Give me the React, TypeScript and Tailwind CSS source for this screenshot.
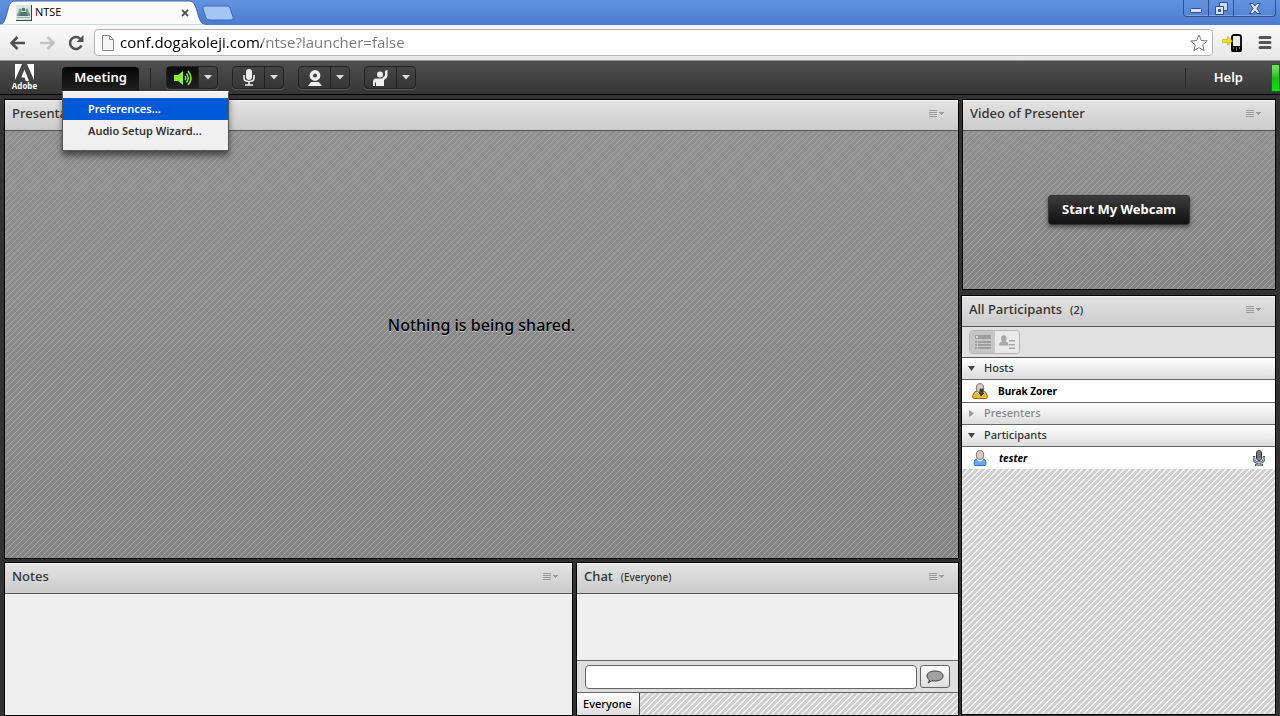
import { useState, type ReactNode } from "react";

const darkStripes =
  "bg-[linear-gradient(135deg,#a6a6a6_8%,transparent_8%,transparent_50%,#a6a6a6_50%,#a6a6a6_58%,transparent_58%),linear-gradient(180deg,#909090,#848484)] bg-[size:6px_6px,100%_100%]";
const lightStripes =
  "bg-[linear-gradient(135deg,#f2f2f2_10%,transparent_10%,transparent_50%,#f2f2f2_50%,#f2f2f2_60%,transparent_60%)] bg-[size:6px_6px] bg-[#cfcfcf]";

function PodMenuIcon() {
  return (
    <svg width="16" height="8" viewBox="0 0 16 8" shapeRendering="crispEdges">
      <path d="M0 0h8v1H0zM0 2h8v1H0zM0 4h8v1H0zM0 6h8v1H0z" fill="#9c9c9c" />
      <path d="M10 2h5v1h-1v1h-1v1h-1V4h-1V3h-1z" fill="#9c9c9c" />
    </svg>
  );
}

type PodProps = { title: string; note?: ReactNode; className?: string; children?: ReactNode };

function Pod({ title, note, className = "", children }: PodProps) {
  return (
    <section className={`flex flex-col border border-black ${className}`}>
      <header className="flex h-[31px] shrink-0 items-center border-b border-[#555] bg-linear-to-b from-[#e3e3e3] to-[#cbcbcb] pr-[13px] pb-[2px] pl-[7px] shadow-[inset_0_1px_0_#f3f3f3]">
        <h2 className="text-[13px] font-medium text-[#333]">{title}</h2>
        {note}
        <button type="button" aria-label={`${title} options`} className="ml-auto">
          <PodMenuIcon />
        </button>
      </header>
      {children}
    </section>
  );
}

function BrowserTabs() {
  return (
    <div className="flex h-[25px] bg-linear-to-b from-[#6394e0] to-[#4c7ace]">
      <div className="relative flex h-[25px] w-[205px] items-center">
        <svg className="absolute inset-0" width="205" height="25" viewBox="0 0 205 25">
          <path d="M0 25C4 24 5 20 7 13 9 5 10 1 15 1H189C194 1 195 5 197 11 199 19 201 24 205 25Z" fill="#fbfbfb" stroke="#3f66ad" />
          <path d="M0 25H205" stroke="#fbfbfb" />
        </svg>
        <svg className="relative ml-4" width="16" height="16" viewBox="0 0 16 16">
          <path d="M0 0h16v16H0z" fill="#3a4446" />
          <path d="M0 0h15v15H0z" fill="#d9e5e1" />
          <path d="M1 9 3 6h2l2 3v2H1zM8 9l2-3h2l2 3v2H8z" fill="#7c9b93" />
          <circle cx="4" cy="5" r="1.500" fill="#7c9b93" />
          <circle cx="11" cy="5" r="1.500" fill="#7c9b93" />
          <circle cx="7.500" cy="4.500" r="1.800" fill="#4e7569" />
          <path d="M5 7h5l2 4H3z" fill="#4e7569" />
          <path d="M1 12h13v1H1z" fill="#9bb5ad" />
        </svg>
        <span className="relative ml-[3px] font-['Open_Sans','Noto_Sans',sans-serif] text-[11px] text-black">NTSE</span>
        <button type="button" aria-label="Close tab" className="relative mr-4 ml-auto">
          <svg width="8" height="8" viewBox="0 0 8 8" stroke="#555" strokeWidth="1.8">
            <path d="M1 1 7 7M7 1 1 7" />
          </svg>
        </button>
      </div>
      <button type="button" aria-label="New tab" className="mt-[5px] -ml-1 self-start">
        <svg width="34" height="16" viewBox="0 0 34 16">
          <path d="M4 1H26Q28 1 29 3L32 12Q33 15 30 15H9Q6 15 5 13L2 4Q1 1 4 1Z" fill="#a3c6f4" stroke="#4169b2" />
        </svg>
      </button>
      <div className="mr-[4px] ml-auto flex h-[17px] rounded-b border border-t-0 border-[#304f8c] shadow-[inset_0_-1px_0_#7ba4e3]">
        <button type="button" aria-label="Minimize" className="flex w-6 items-center justify-center">
          <svg width="12" height="5" viewBox="0 0 12 5" className="mt-1">
            <rect x="0.5" y="0.5" width="11" height="4" rx="1" fill="#d6e3f8" stroke="#304f8c" />
          </svg>
        </button>
        <button type="button" aria-label="Restore" className="flex w-[26px] items-center justify-center border-x border-[#304f8c]">
          <svg width="13" height="13" viewBox="0 0 13 13" stroke="#304f8c" fillRule="evenodd">
            <path d="M4.500.5h8v8h-8z" fill="#c9dbf6" />
            <path d="M.5 4.500h8v8h-8zM3.500 7.500v2h2v-2z" fill="#d6e3f8" />
          </svg>
        </button>
        <button type="button" aria-label="Close window" className="flex w-[41px] items-center justify-center">
          <svg width="12" height="11" viewBox="0 0 12 11">
            <path d="M.5.5H4L6 3 8 .5h3.500L8 5.500l3.500 5H8L6 8l-2 2.500H.5L4 5.500Z" fill="#d6e3f8" stroke="#304f8c" />
          </svg>
        </button>
      </div>
    </div>
  );
}

function AddressBar() {
  return (
    <div className="flex h-9 items-center border-b border-[#9a9a9a] bg-linear-to-b from-[#fbfbfb] to-[#e6e6e6] pr-2 pl-[9px]">
      <button type="button" aria-label="Back" className="pt-[1px]">
        <svg width="17" height="14" viewBox="0 0 17 14" fill="none" stroke="#505050" strokeWidth="2.600">
          <path d="M16 7H3M8.500 1 2.500 7l6 6" />
        </svg>
      </button>
      <button type="button" aria-label="Forward" className="ml-[13px] pt-[1px]">
        <svg width="17" height="14" viewBox="0 0 17 14" fill="none" stroke="#c3c3c3" strokeWidth="2.600">
          <path d="M1 7h13M8.500 1l6 6-6 6" />
        </svg>
      </button>
      <button type="button" aria-label="Reload" className="ml-3">
        <svg width="16" height="16" viewBox="0 0 16 16">
          <path d="M13.500 10.500A6 6 0 1 1 12 3.500" fill="none" stroke="#505050" strokeWidth="2.500" />
          <path d="M15.500 0v7H8.500Z" fill="#505050" />
        </svg>
      </button>
      <div className="mr-[9px] ml-[10px] flex h-[27px] flex-1 items-center rounded-sm border border-[#b4b4b4] bg-white pr-1 pl-[7px]">
        <svg width="12" height="16" viewBox="0 0 12 16" fill="#f6f6f6" stroke="#888">
          <path d="M.5.5h7l4 4v11H.5zM7.500.5v4h4" />
        </svg>
        <input
          type="text"
          aria-label="Address"
          defaultValue="conf.dogakoleji.com/ntse?launcher=false"
          className="ml-[6px] min-w-0 flex-1 bg-[linear-gradient(90deg,#000_142px,#777_142px)] bg-clip-text font-['Open_Sans','Noto_Sans',sans-serif] text-[15px] text-transparent outline-none"
        />
        <button type="button" aria-label="Bookmark">
          <svg width="18" height="18" viewBox="0 0 18 18">
            <path d="m9 1 2.300 5.500 6 .5-4.600 3.900 1.500 5.900L9 13.600l-5.200 3.200 1.500-5.900L.7 7l6-.5Z" fill="#fff" stroke="#777" />
          </svg>
        </button>
      </div>
      <button type="button" aria-label="Send to phone">
        <svg width="20" height="18" viewBox="0 0 20 18">
          <rect x="10" y="1" width="9" height="16" rx="2" fill="#e8e8e8" stroke="#000" strokeWidth="1.800" />
          <path d="M9 12h11v4q0 2-2 2h-7q-2 0-2-2z" fill="#000" />
          <path d="M11 14h1M14 14h1M17 14h1M14 16h1" stroke="#ccc" />
          <path d="M.5 5.500h5V2.500l5 4.500-5 4.500v-3h-5z" fill="#f8dc1c" stroke="#bda200" strokeWidth="0.600" />
        </svg>
      </button>
      <button type="button" aria-label="Browser menu" className="ml-4">
        <svg width="14" height="13" viewBox="0 0 14 13" stroke="#555" strokeWidth="3" strokeLinecap="round">
          <path d="M2 1.500h10M2 6.500h10M2 11.500h10" />
        </svg>
      </button>
    </div>
  );
}

function SplitButton({ label, active, children }: { label: string; active?: boolean; children: ReactNode }) {
  return (
    <div className="flex h-[23px] rounded-sm border border-[#222] bg-linear-to-b from-[#454545] to-[#363636] shadow-[0_1px_0_#5a5a5a]">
      <button
        type="button"
        aria-label={label}
        aria-pressed={active}
        className={`flex w-8 items-center justify-center border-r border-[#222] ${active ? "bg-linear-to-b from-[#0c0c0c] to-[#1e1e1e]" : ""}`}
      >
        {children}
      </button>
      <button type="button" aria-label={`${label} options`} className="flex w-[18px] items-center justify-center">
        <svg width="8" height="5" viewBox="0 0 8 5">
          <path d="M0 0h8L4 4.500Z" fill="#ddd" />
        </svg>
      </button>
    </div>
  );
}

function MeetingMenu() {
  return (
    <div
      role="menu"
      className="absolute top-[30px] left-[62px] z-10 w-[167px] border border-[#555] border-t-white bg-[#f0f0f0] pt-[6px] pb-[8px] text-[11px] font-semibold shadow-[0_5px_6px_rgba(0,0,0,0.5)]"
    >
      <button type="button" role="menuitem" className="block h-[22px] w-full bg-[#0059d6] pl-[25px] text-left text-white">
        Preferences...
      </button>
      <button type="button" role="menuitem" className="block h-[22px] w-full pl-[25px] text-left text-[#333]">
        Audio Setup Wizard...
      </button>
    </div>
  );
}

function AppBar() {
  return (
    <nav className="relative flex h-[34px] items-center border-b border-black bg-linear-to-b from-[#505050] to-[#353535] text-white">
      <div className="ml-[11px] flex w-[27px] flex-col items-center">
        <svg width="19" height="17" viewBox="0 0 19 17" fill="#fff">
          <path d="M0 0h7L0 16ZM12 0h7v16ZM9.500 5.500 14 17h-3.200l-1.300-3.500H6.300Z" />
        </svg>
        <span className="font-['Open_Sans','Noto_Sans',sans-serif] text-[8px] leading-[10px] font-bold">Adobe</span>
      </div>
      <button type="button" aria-haspopup="menu" className="mt-[6px] ml-6 h-6 w-[77px] self-start rounded-t-sm bg-linear-to-b from-[#060606] to-[#222] pb-[3px] text-[13px] font-semibold">
        Meeting
      </button>
      <div className="ml-[11px] h-5 w-px bg-[#252525]" />
      <div className="ml-[15px] flex gap-[14px]">
        <SplitButton label="Speakers" active>
          <svg width="18" height="16" viewBox="0 0 18 16" fill="none" stroke="#8eea3a" strokeWidth="1.500">
            <path d="M0 5h4l5-4v14l-5-4H0Z" fill="#8eea3a" stroke="none" />
            <path d="M11 6q1.500 2 0 4M12.500 3.500q3.500 4.500 0 9M14 1q6 7 0 14" />
          </svg>
        </SplitButton>
        <SplitButton label="Microphone">
          <svg width="12" height="17" viewBox="0 0 12 17">
            <rect x="3" y="0" width="6" height="11" rx="3" fill="#eee" />
            <path d="M1 6v3q0 3.500 5 3.500T11 9V6M6 12v4M2 16h8" fill="none" stroke="#eee" strokeWidth="1.600" />
          </svg>
        </SplitButton>
        <SplitButton label="Webcam">
          <svg width="14" height="16" viewBox="0 0 14 16">
            <circle cx="7" cy="5.500" r="3.700" fill="none" stroke="#eee" strokeWidth="3.400" />
            <path d="M3 12h8l3 4H0Z" fill="#eee" />
          </svg>
        </SplitButton>
        <SplitButton label="Raise hand">
          <svg width="15" height="16" viewBox="0 0 15 16" fill="#eee">
            <circle cx="7" cy="4.500" r="3" />
            <path d="M12 1 14 0h.5V6q0 2-3.500 4v6H3v-4l-1 1v3H0v-4q0-3.500 3-3.500h6l3-3Z" />
          </svg>
        </SplitButton>
      </div>
      <div className="ml-auto h-5 w-px bg-[#252525]" />
      <button type="button" className="ml-[28px] text-[13px] font-semibold">
        Help
      </button>
      <div className="ml-[28px] h-7 w-[9px] border border-[#176617] bg-linear-to-b from-[#7be06d] via-[#1eb81e] to-[#00e600]" />
      <MeetingMenu />
    </nav>
  );
}

function Person({ shirt, edge, mic }: { shirt: string; edge: string; mic?: boolean }) {
  return (
    <svg width="16" height="16" viewBox="0 0 16 16">
      {mic ? (
        <path d="M1.500 15.500Q0 15 1 12 2 8 5 8h6q3 0 4 4 1 3-.5 3.500Z" fill={shirt} stroke={edge} />
      ) : (
        <path d="M3 15.500Q2 15.500 2 13 2 9 5 9h6q3 0 3 4 0 2.500-1 2.500Z" fill={shirt} stroke={edge} />
      )}
      <path d="M5 9q3 4 6 0" fill="#fff" stroke="#fff" />
      <ellipse cx="8" cy="5" rx="3.700" ry="4.400" fill="#d8cdbd" stroke="#777" />
      {mic && <path d="M8 6h3v4H8zM7 9l2 4 3-3" fill="#333" stroke="#444" />}
    </svg>
  );
}

function Group({ name, open }: { name: string; open?: boolean }) {
  return (
    <button
      type="button"
      aria-expanded={!!open}
      className={`flex h-[22px] shrink-0 items-center border-b border-[#666] bg-linear-to-b from-white to-[#dcdcdc] pl-[6px] text-[11px] font-medium ${open ? "text-[#333]" : "text-[#888]"}`}
    >
      <svg width="7" height="7" viewBox="0 0 7 7">
        {open ? <path d="M0 1h7L3.500 6Z" fill="#444" /> : <path d="M1 0v7l5-3.500Z" fill="#999" />}
      </svg>
      <span className="ml-[9px]">{name}</span>
    </button>
  );
}

function Participants() {
  return (
    <Pod title="All Participants" note={<span className="ml-2 text-[11px] font-medium text-[#333]">(2)</span>} className="-ml-px flex-1">
      <div className="flex h-[31px] shrink-0 items-center border-b border-[#555] bg-[#e1e1e1] pl-[7px]">
        <div className="flex h-6 overflow-hidden rounded-sm border border-[#b5b5b5]">
          <button type="button" aria-label="Attendee view" className="flex w-[25px] items-center justify-center bg-[#c6c6c6]">
            <svg width="16" height="15" viewBox="0 0 16 15" fill="#9f9f9f" shapeRendering="crispEdges">
              <path d="M0 0h16v4H0zM0 6h2v2H0zM3 6h13v2H3zM0 9h2v2H0zM3 9h13v2H3zM0 12h2v2H0zM3 12h13v2H3z" />
              <path d="M1 1h2v2H1z" fill="#ddd" />
            </svg>
          </button>
          <button type="button" aria-label="Attendee status view" className="flex w-6 items-center justify-center bg-[#eaeaea]">
            <svg width="16" height="15" viewBox="0 0 16 15" fill="#a8a8a8">
              <path d="M2 3a2.800 2.800 0 0 1 5.600 0q0 2-1 3.500 2.900.5 2.900 4H0q0-3.500 3-4-1-1.500-1-3.500ZM10 5h6v1.500h-6zM10 9h6v1.500h-6zM10 12.500h6V14h-6z" />
            </svg>
          </button>
        </div>
      </div>
      <Group name="Hosts" open />
      <div className="flex h-[23px] shrink-0 items-center border-b border-[#666] bg-white pl-[10px] text-[10px] font-bold text-black">
        <Person shirt="#efb83e" edge="#98661a" mic />
        <span className="ml-[10px]">Burak Zorer</span>
      </div>
      <Group name="Presenters" />
      <Group name="Participants" open />
      <div className="flex h-[22px] shrink-0 items-center bg-white pr-[10px] pl-[10px] text-[10px] font-bold text-black italic">
        <Person shirt="#6eaaea" edge="#316eb5" />
        <span className="ml-[11px]">tester</span>
        <svg className="ml-auto" width="12" height="16" viewBox="0 0 12 16">
          <path d="M1 6v3q0 3.500 5 3.500T11 9V6M6 12v3M2 15h8" fill="none" stroke="#3c5365" strokeWidth="2.400" />
          <path d="M1 7v2q0 3.500 5 3.500T11 9V7M6 12v3M3 15h6" fill="none" stroke="#b9d6ea" />
          <rect x="3.500" y="0.500" width="5" height="10" rx="2.500" fill="#999" stroke="#333" />
          <path d="M4 3h4M4 5h4M4 7h4" stroke="#555" />
        </svg>
      </div>
      <div className={`flex-1 ${lightStripes}`} />
    </Pod>
  );
}

function ChatPod() {
  const [message, setMessage] = useState("");

  return (
    <Pod title="Chat" note={<span className="ml-2 text-[10px] font-medium text-[#333]">(Everyone)</span>}>
      <div className="flex-1 bg-[#efefef]" />
      <form className="flex h-[33px] items-center gap-[3px] border-y border-[#666] bg-[#dedede] px-2" onSubmit={(e) => e.preventDefault()}>
        <input
          type="text"
          aria-label="Chat message"
          value={message}
          onChange={(e) => setMessage(e.target.value)}
          className="h-6 min-w-0 flex-1 rounded-[4px] border border-[#666] bg-white px-2 text-[11px] text-black outline-none"
        />
        <button type="submit" aria-label="Send message" className="flex h-[23px] w-[30px] items-center justify-center rounded-[3px] border border-[#666] bg-linear-to-b from-white to-[#ddd]">
          <svg width="18" height="14" viewBox="0 0 18 14">
            <path d="M9 1c5 0 8 2 8 5s-3 5-8 5q-2 0-3-.300L2 13l1.500-3Q1 8.500 1 6c0-3 3-5 8-5Z" fill="#a2a2a2" stroke="#444" />
          </svg>
        </button>
      </form>
      <div className={`flex h-[22px] ${lightStripes}`}>
        <button type="button" className="border-r border-[#444] bg-linear-to-b from-white to-[#dedede] pr-[7px] pl-[6px] text-[11px] font-medium text-black">
          Everyone
        </button>
      </div>
    </Pod>
  );
}

export default function App() {
  return (
    <div className="flex h-screen flex-col bg-[#323232] font-['Noto_Sans','Open_Sans',sans-serif]">
      <BrowserTabs />
      <AddressBar />
      <AppBar />
      <main className="flex min-h-0 flex-1 gap-[3px] px-1 pt-1">
        <div className="flex min-w-0 flex-1 flex-col gap-[3px]">
          <Pod title="Presentation" className="flex-1">
            <div className={`flex flex-1 items-center justify-center pb-10 ${darkStripes}`}>
              <p className="text-base font-medium text-black [text-shadow:0_1px_0_#bbb]">Nothing is being shared.</p>
            </div>
          </Pod>
          <div className="grid h-[154px] grid-cols-[569fr_383fr] gap-[3px]">
            <Pod title="Notes">
              <div className="flex-1 bg-[#efefef]" />
            </Pod>
            <ChatPod />
          </div>
        </div>
        <div className="flex w-[314px] flex-col gap-[5px] pb-px">
          <Pod title="Video of Presenter" className="h-[191px]">
            <div className={`flex flex-1 items-center justify-center ${darkStripes}`}>
              <button type="button" className="h-[30px] w-[142px] rounded-[3px] border border-[#333] bg-linear-to-b from-[#3c3c3c] to-[#111] text-[13px] font-bold text-white shadow-[0_2px_4px_rgba(0,0,0,0.5)]">
                Start My Webcam
              </button>
            </div>
          </Pod>
          <Participants />
        </div>
      </main>
    </div>
  );
}
